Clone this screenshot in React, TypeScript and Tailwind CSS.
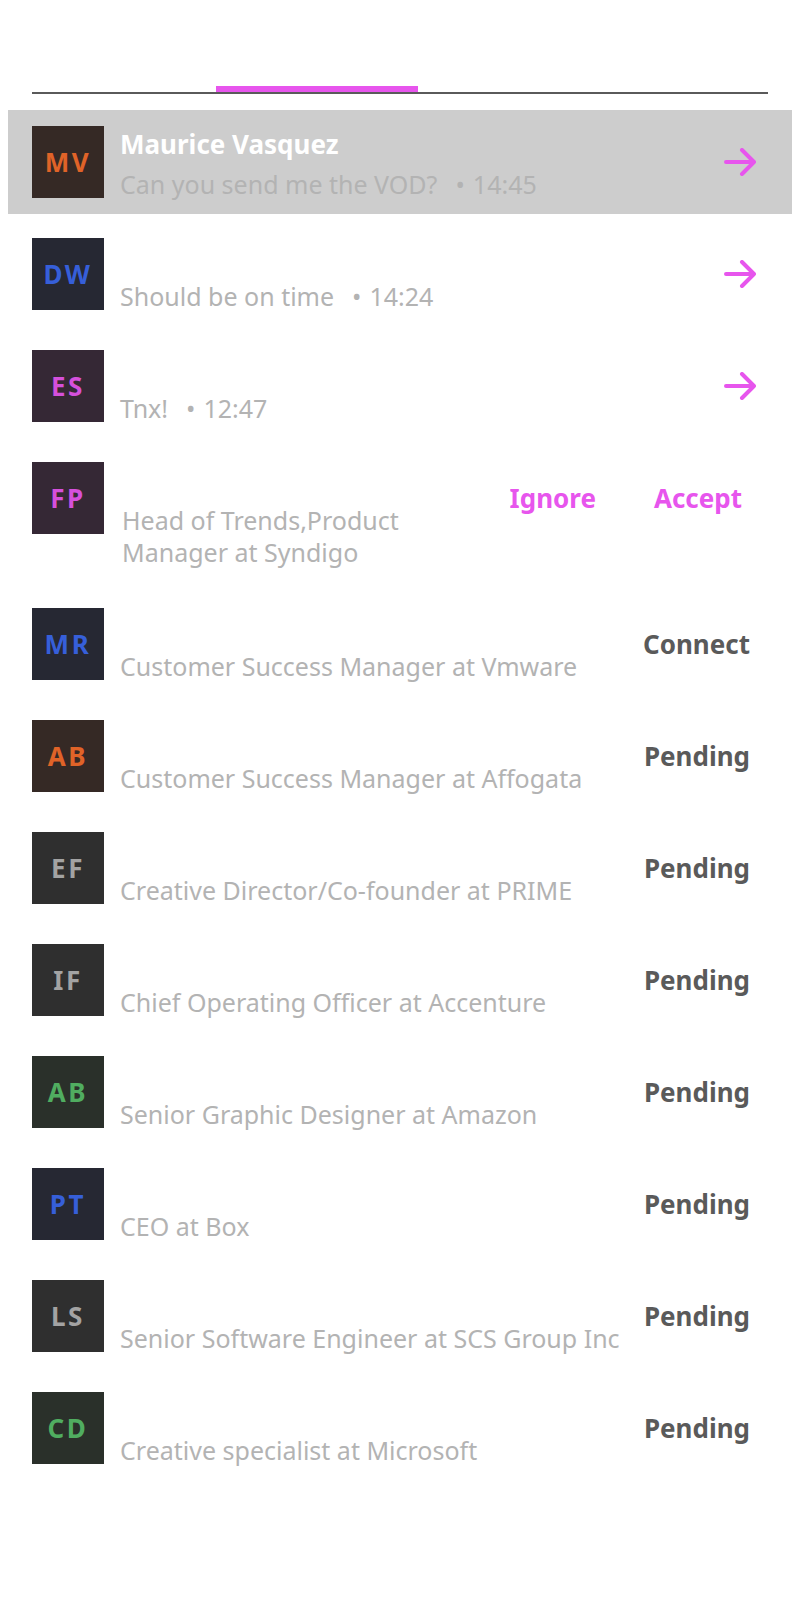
import React from "react";

type Tone = "orange" | "blue" | "purple" | "gray" | "green";

const tones: Record<Tone, string> = {
  orange: "bg-[#352925] text-[#e06328]",
  blue: "bg-[#262833] text-[#365fd9]",
  purple: "bg-[#352835] text-[#d550dc]",
  gray: "bg-[#2f2f2f] text-[#a3a3a3]",
  green: "bg-[#2a302a] text-[#50ad60]",
};

type Person = {
  initials: string;
  tone: Tone;
  name?: string;
  detail: string;
  time?: string;
  action: "open" | "invite" | "Connect" | "Pending";
};

const people: Person[] = [
  { initials: "MV", tone: "orange", name: "Maurice Vasquez", detail: "Can you send me the VOD?", time: "14:45", action: "open" },
  { initials: "DW", tone: "blue", detail: "Should be on time", time: "14:24", action: "open" },
  { initials: "ES", tone: "purple", detail: "Tnx!", time: "12:47", action: "open" },
  { initials: "FP", tone: "purple", detail: "Head of Trends,Product Manager at Syndigo", action: "invite" },
  { initials: "MR", tone: "blue", detail: "Customer Success Manager at Vmware", action: "Connect" },
  { initials: "AB", tone: "orange", detail: "Customer Success Manager at Affogata", action: "Pending" },
  { initials: "EF", tone: "gray", detail: "Creative Director/Co-founder at PRIME", action: "Pending" },
  { initials: "IF", tone: "gray", detail: "Chief Operating Officer at Accenture", action: "Pending" },
  { initials: "AB", tone: "green", detail: "Senior Graphic Designer at Amazon", action: "Pending" },
  { initials: "PT", tone: "blue", detail: "CEO at Box", action: "Pending" },
  { initials: "LS", tone: "gray", detail: "Senior Software Engineer at SCS Group Inc", action: "Pending" },
  { initials: "CD", tone: "green", detail: "Creative specialist at Microsoft", action: "Pending" },
];

function ArrowIcon() {
  return (
    <svg viewBox="0 0 32 28" className="h-7 w-8" fill="none" stroke="currentColor" strokeWidth="4" strokeLinecap="round" strokeLinejoin="round">
      <path d="M2 14H30M18 2L30 14L18 26" />
    </svg>
  );
}

function Actions({ action }: { action: Person["action"] }) {
  if (action === "open") {
    return (
      <button type="button" aria-label="Open chat" className="mr-3 text-[#e755ed]">
        <ArrowIcon />
      </button>
    );
  }
  if (action === "invite") {
    return (
      <div className="mr-[26px] flex gap-[58px] text-[#e755ed]">
        <button type="button">Ignore</button>
        <button type="button">Accept</button>
      </div>
    );
  }
  return (
    <button type="button" className="mr-[18px] text-[#5a5a5a]">
      {action}
    </button>
  );
}

function Row({ person, active }: { person: Person; active: boolean }) {
  const invite = person.action === "invite";
  return (
    <li className={`flex items-start px-6 pt-4 ${invite ? "min-h-[138px]" : "min-h-[104px]"} ${active ? "bg-[#cdcdcd]" : ""}`}>
      <div className={`flex size-18 shrink-0 items-center justify-center text-[26px] leading-9 font-bold tracking-widest ${tones[person.tone]}`}>
        {person.initials}
      </div>
      <div className={`shrink-0 ${invite ? "ml-[18px] w-80" : "ml-4"}`}>
        <p className="h-[42px] text-[26px] leading-9 font-bold text-white">{person.name}</p>
        <p className="text-[25px] leading-8 text-[#b3b3b3]">
          {person.detail}
          {person.time && (
            <span className="ml-[18px] inline-flex gap-2">
              <span>•</span>
              <span>{person.time}</span>
            </span>
          )}
        </p>
      </div>
      <div className="ml-auto flex h-18 items-center text-[26px] font-bold">
        <Actions action={person.action} />
      </div>
    </li>
  );
}

export default function App() {
  return (
    <main className="min-h-screen bg-white px-2 font-['Noto_Sans',sans-serif]">
      <header className="mx-6 border-b-2 border-[#5a5a5a] pt-[86px]">
        <div className="ml-[25%] h-1.5 w-[202px] bg-[#e755ed]" />
      </header>
      <ul className="mt-4 flex flex-col gap-2">
        {people.map((person, i) => (
          <Row key={i} person={person} active={i === 0} />
        ))}
      </ul>
    </main>
  );
}
